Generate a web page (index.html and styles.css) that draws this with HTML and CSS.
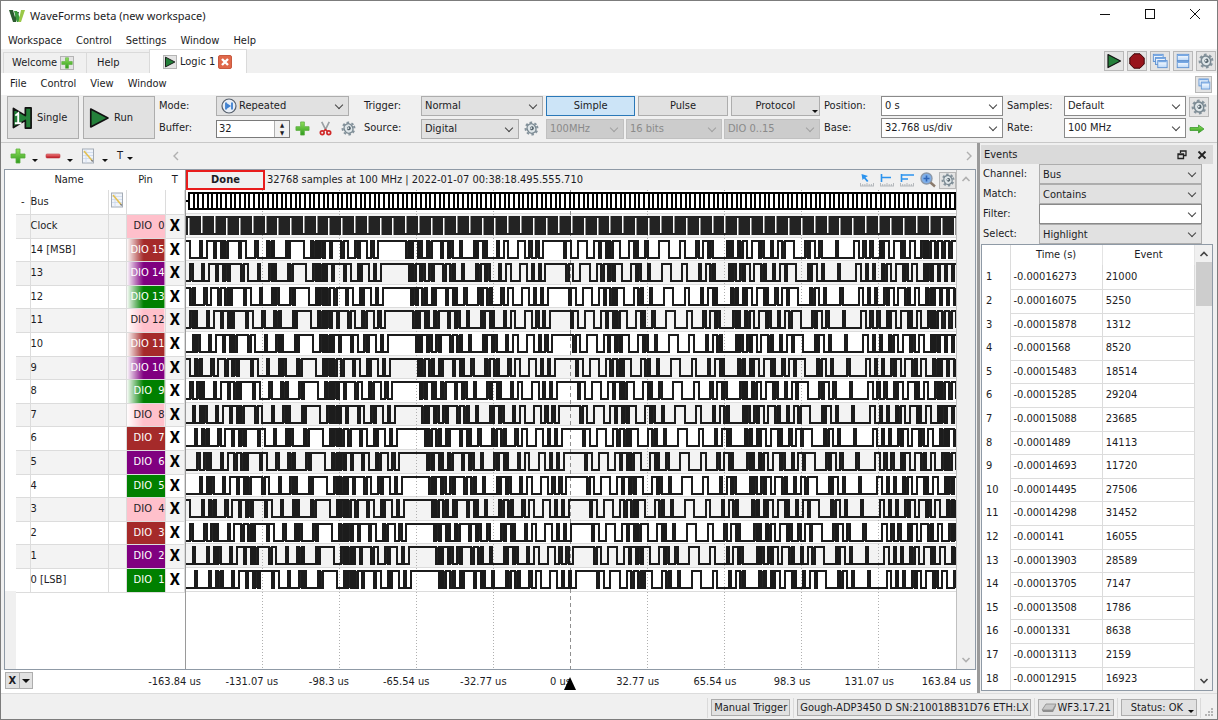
FILE: index.html
```html
<!DOCTYPE html>
<html lang="en">
<head>
    <meta charset="UTF-8">
    <meta name="viewport" content="width=device-width, initial-scale=1.0">
    <title>WaveForms beta (new workspace)</title>
    <link rel="stylesheet" href="styles.css">
</head>
<body>
    <svg class="defs" aria-hidden="true">
        <linearGradient id="green" x1="0" y1="0" x2="0" y2="1"><stop offset="0" stop-color="#8fe05a"/><stop offset="1" stop-color="#2f9a1e"/></linearGradient>
        <linearGradient id="red" x1="0" y1="0" x2="0" y2="1"><stop offset="0" stop-color="#f08080"/><stop offset="1" stop-color="#b8101c"/></linearGradient>
        <linearGradient id="blue" x1="0" y1="0" x2="0" y2="1"><stop offset="0" stop-color="#ffffff"/><stop offset="1" stop-color="#bcd8f8"/></linearGradient>
        <symbol id="i-plus" viewBox="0 0 16 16"><path d="M6 1h4v5h5v4h-5v5H6v-5H1V6h5z" fill="url(#green)" stroke="#5cae40" stroke-width=".8"/></symbol>
        <symbol id="i-minus" viewBox="0 0 16 16"><rect x="1" y="6" width="14" height="4" rx="1" fill="url(#red)" stroke="#c04048" stroke-width=".6"/></symbol>
        <symbol id="i-play" viewBox="0 0 16 16"><path d="M2 1.500L14.500 8 2 14.500z" fill="#24803a" stroke="#111" stroke-width="1.200" stroke-linejoin="round"/></symbol>
        <symbol id="i-single" viewBox="0 0 22 24"><path d="M1.500 2L14 9.500V1.500h6v21h-6v-8L1.500 22z" fill="#24803a" stroke="#111" stroke-width="1.800" stroke-linejoin="round"/><path d="M3.500 9.500l3-2.500v10M3 17.500h7" fill="none" stroke="#fff" stroke-width="2"/></symbol>
        <symbol id="i-stop" viewBox="0 0 16 16"><path d="M5 .8h6L15.200 5v6L11 15.200H5L.8 11V5z" fill="#98141c" stroke="#3a0508" stroke-width="1"/></symbol>
        <symbol id="i-gear" viewBox="0 0 16 16"><g transform="rotate(-25 8 8)"><circle cx="8" cy="8" r="6.300" fill="none" stroke="#85939c" stroke-width="2.200" stroke-dasharray="2.600 2.350"/><ellipse cx="8" cy="8" rx="4.600" ry="5.200" fill="#dfe6e9" stroke="#7a8992" stroke-width="1.500"/><circle cx="8.500" cy="8" r="2.100" fill="#56656e"/><circle cx="8" cy="7.500" r=".9" fill="#e8eef0"/></g></symbol>
        <symbol id="i-cut" viewBox="0 0 16 16"><path d="M4 1l4.500 9M12 1L7.500 10" stroke="#9aa0a4" stroke-width="1.800"/><circle cx="4.500" cy="12.500" r="2" fill="none" stroke="#d02828" stroke-width="1.800"/><circle cx="11.500" cy="12.500" r="2" fill="none" stroke="#d02828" stroke-width="1.800"/><path d="M6 11l2-2 2 2" fill="none" stroke="#d02828" stroke-width="1.500"/></symbol>
        <symbol id="i-note" viewBox="0 0 14 16"><rect x="1.500" y="1" width="11" height="14" fill="#f0f4fa" stroke="#a4acb6"/><path d="M2 4.500h10M2 7.500h10M2 10.500h10M5 1v14" stroke="#ccd8ec" stroke-width=".8"/><path d="M3 3l8 9.500" stroke="#e4c050" stroke-width="1.600"/><path d="M10.500 12l1.200 1.500" stroke="#777" stroke-width="1.300"/></symbol>
        <symbol id="i-cascade" viewBox="0 0 18 18"><g fill="url(#blue)" stroke="#5b8fd0" stroke-width="1"><rect x="1.500" y="1.500" width="11" height="8"/><rect x="4" y="5" width="11" height="8"/><rect x="6.500" y="8.500" width="10.500" height="8"/></g><path d="M2 2.500h10M4.500 6h10M7 9.500h9.500" stroke="#76a8e4" stroke-width="1.600"/></symbol>
        <symbol id="i-tile" viewBox="0 0 18 18"><g fill="url(#blue)" stroke="#5b8fd0"><rect x="2.500" y="1.500" width="13" height="7"/><rect x="2.500" y="9.500" width="13" height="7"/></g><path d="M3 2.500h12M3 10.500h12" stroke="#76a8e4" stroke-width="1.600"/></symbol>
        <symbol id="i-float" viewBox="0 0 18 18"><g fill="url(#blue)" stroke="#5b8fd0"><rect x="2.500" y="2.500" width="12" height="9"/><rect x="5.500" y="6.500" width="11" height="9"/></g><path d="M3 3.500h11M6 7.500h10" stroke="#76a8e4" stroke-width="1.600"/></symbol>
        <symbol id="i-ruler" viewBox="0 0 14 4"><path d="M0 3h14M.5 0v3M2.700 1v2M4.900 1v2M7 0v3M9.200 1v2M11.400 1v2M13.500 0v3" stroke="#b4b8bc" fill="none"/></symbol>
        <symbol id="i-left" viewBox="0 0 8 10"><path d="M6 1L2 5l4 4" fill="none" stroke="#b0b0b0" stroke-width="1.400"/></symbol>
        <symbol id="i-up" viewBox="0 0 10 8"><path d="M1.500 6L5 2.500 8.500 6" fill="none" stroke="currentColor" stroke-width="1.600"/></symbol>
    </svg>

    <header class="titlebar">
        <svg class="logo" viewBox="0 0 16 12"><path d="M0 0h4l2 7 2-5h2L7 12H4z" fill="#2c5a30"/><path d="M5 1h3l3 7-1.500 4H8z" fill="#3a9a3c"/><path d="M9.500 12L12 0h4l-4 12z" fill="#9ac848"/></svg>
        <h1>WaveForms beta (new workspace)</h1>
        <button class="win-btn" aria-label="Minimize"><svg viewBox="0 0 12 12"><path d="M1 6.500h10"/></svg></button>
        <button class="win-btn" aria-label="Maximize"><svg viewBox="0 0 12 12"><rect x="1.500" y="1.500" width="9" height="9"/></svg></button>
        <button class="win-btn" aria-label="Close"><svg viewBox="0 0 12 12"><path d="M1 1l10 10M11 1L1 11"/></svg></button>
    </header>

    <nav class="menu">
        <a href="#">Workspace</a><a href="#">Control</a><a href="#">Settings</a><a href="#">Window</a><a href="#">Help</a>
    </nav>

    <div class="tabs">
        <a href="#" class="tab welcome">Welcome <span class="mini"><svg><use href="#i-plus"/></svg></span></a>
        <a href="#" class="tab help">Help</a>
        <a href="#" class="tab active"><span class="mini"><svg><use href="#i-play"/></svg></span> Logic 1 <span class="close"><svg viewBox="0 0 12 12"><path d="M3 3l6 6M9 3L3 9" stroke="#fff" stroke-width="2.400"/></svg></span></a>
        <div class="tab-tools">
            <button class="icon-btn" aria-label="Run all"><svg><use href="#i-play"/></svg></button>
            <button class="icon-btn" aria-label="Stop all"><svg><use href="#i-stop"/></svg></button>
            <button class="icon-btn" aria-label="Cascade"><svg><use href="#i-cascade"/></svg></button>
            <button class="icon-btn" aria-label="Tile"><svg><use href="#i-tile"/></svg></button>
            <button class="icon-btn" aria-label="Options"><svg><use href="#i-gear"/></svg></button>
        </div>
    </div>

    <nav class="menu submenu">
        <a href="#">File</a><a href="#">Control</a><a href="#">View</a><a href="#">Window</a>
        <button class="icon-btn small" aria-label="Undock"><svg><use href="#i-float"/></svg></button>
    </nav>

    <div class="toolbar">
        <button class="big"><svg class="single"><use href="#i-single"/></svg>Single</button>
        <button class="big"><svg class="run"><use href="#i-play"/></svg>Run</button>
        <div class="group mode">
            <label for="mode">Mode:</label>
            <span class="combo with-icon"><svg class="lead" viewBox="0 0 16 16"><circle cx="8" cy="8" r="7" fill="#e8eef6" stroke="#555f6c" stroke-width="1.200"/><path d="M5 4.500v7M11 4.500v7" stroke="#3f80d0" stroke-width="1.800"/><path d="M5.500 5L10 8l-4.500 3z" fill="#3f80d0"/></svg><select id="mode"><option>Repeated</option></select></span>
            <label for="buffer">Buffer:</label>
            <div class="line">
                <span class="spin"><input id="buffer" type="text" value="32"><span class="steps"><button aria-label="More">▲</button><button aria-label="Less">▼</button></span></span>
                <svg class="ico"><use href="#i-plus"/></svg><svg class="ico"><use href="#i-cut"/></svg><svg class="ico"><use href="#i-gear"/></svg>
            </div>
        </div>
        <div class="group trigger">
            <label for="trig">Trigger:</label>
            <span class="combo"><select id="trig"><option>Normal</option></select></span>
            <label for="src">Source:</label>
            <div class="line"><span class="combo source"><select id="src"><option>Digital</option></select></span><svg class="ico"><use href="#i-gear"/></svg></div>
        </div>
        <div class="kinds">
            <div class="buttons"><button class="on">Simple</button><button>Pulse</button><button>Protocol<i class="caret"></i></button></div>
            <div class="line">
                <span class="combo off freq"><select disabled aria-label="Frequency"><option>100MHz</option></select></span>
                <span class="combo off"><select disabled aria-label="Width"><option>16 bits</option></select></span>
                <span class="combo off"><select disabled aria-label="Pins"><option>DIO 0..15</option></select></span>
            </div>
        </div>
        <div class="group position">
            <label for="pos">Position:</label>
            <span class="combo edit"><select id="pos"><option>0 s</option></select></span>
            <label for="base">Base:</label>
            <span class="combo edit"><select id="base"><option>32.768 us/div</option></select></span>
        </div>
        <div class="group samples">
            <label for="smp">Samples:</label>
            <span class="combo edit"><select id="smp"><option>Default</option></select></span>
            <label for="rate">Rate:</label>
            <span class="combo edit"><select id="rate"><option>100 MHz</option></select></span>
        </div>
        <div class="extra">
            <button class="icon-btn" aria-label="Sampling options"><svg><use href="#i-gear"/></svg></button>
            <svg class="arrow" viewBox="0 0 16 10"><path d="M1 3.500h8.500V1L15 5 9.500 9V6.500H1z" fill="url(#green)" stroke="#3c9a30" stroke-width=".8"/></svg>
        </div>
    </div>

    <main>
        <section class="logic">
            <div class="strip">
                <button aria-label="Add"><svg><use href="#i-plus"/></svg><i class="caret"></i></button>
                <button aria-label="Remove"><svg><use href="#i-minus"/></svg><i class="caret"></i></button>
                <button aria-label="Edit"><svg><use href="#i-note"/></svg><i class="caret"></i></button>
                <button class="t-btn">T<i class="caret"></i></button>
                <div class="hscroll"><svg><use href="#i-left"/></svg><svg class="flip"><use href="#i-left"/></svg></div>
            </div>
            <div class="panel">
                <div class="gutter"></div>
                <table class="signals">
                    <thead><tr><th></th><th>Name</th><th></th><th>Pin</th><th>T</th></tr></thead>
                    <tbody id="signals"></tbody>
                </table>
                <div class="plot">
                    <div class="info">
                        <strong>Done</strong>
                        <span>32768 samples at 100 MHz | 2022-01-07 00:38:18.495.555.710</span>
                        <div class="tools">
                            <svg viewBox="0 0 14 14"><path d="M1.500 1l1 6 1.500-1.500 3 3.500 1.500-1-3-3.500L8 3z" fill="#2b93ee"/><use href="#i-ruler" y="10" width="14" height="4"/></svg>
                            <svg viewBox="0 0 14 14"><path d="M1.500 1v8M1.500 4.500H11" stroke="#2b93ee" stroke-width="1.600"/><use href="#i-ruler" y="10" width="14" height="4"/></svg>
                            <svg viewBox="0 0 14 14"><path d="M1.500 1v8M1.500 2H14M1.500 6H8" stroke="#2b93ee" stroke-width="1.600" fill="none"/><use href="#i-ruler" y="10" width="14" height="4"/></svg>
                            <svg class="lens" viewBox="0 0 16 16"><circle cx="6.500" cy="6.500" r="5.500" fill="#7eaee8" stroke="#8c98a8" stroke-width="1.400"/><path d="M3.500 6.500h6M6.500 3.500v6" stroke="#2f66b8" stroke-width="1.600"/><path d="M10.500 10.500l4.500 4" stroke="#8a7a6c" stroke-width="2.400"/></svg>
                            <button class="icon-btn small" aria-label="Plot options"><svg><use href="#i-gear"/></svg></button>
                        </div>
                    </div>
                    <svg id="waves" class="waves" viewBox="0 0 770 479" preserveAspectRatio="none"></svg>
                </div>
                <div class="vscroll pale"><svg><use href="#i-up"/></svg><svg class="down"><use href="#i-up"/></svg></div>
            </div>
            <div class="axis">
                <div class="x-btn"><button>X</button><button aria-label="Axis menu"><i class="caret"></i></button></div>
                <div class="ticks">
                    <span>-163.84 us</span><span>-131.07 us</span><span>-98.3 us</span><span>-65.54 us</span><span>-32.77 us</span><span class="zero">0 us</span><span>32.77 us</span><span>65.54 us</span><span>98.3 us</span><span>131.07 us</span><span>163.84 us</span>
                </div>
            </div>
        </section>

        <aside class="events">
            <h2>Events
                <button aria-label="Float"><svg viewBox="0 0 10 10"><path d="M3.500 3V1h5.500v4.500H7M1 4h5.500v4.500H1zM1 4.500h5.500" fill="none" stroke="#222" stroke-width="1.300"/></svg></button>
                <button aria-label="Close events"><svg viewBox="0 0 10 10"><path d="M1.500 1.500l7 7M8.500 1.500l-7 7" stroke="#222" stroke-width="1.800"/></svg></button>
            </h2>
            <div class="filters">
                <label for="ch">Channel:</label><span class="combo"><select id="ch"><option>Bus</option></select></span>
                <label for="match">Match:</label><span class="combo"><select id="match"><option>Contains</option></select></span>
                <label for="filter">Filter:</label><span class="combo edit"><select id="filter"><option></option></select></span>
                <label for="sel">Select:</label><span class="combo"><select id="sel"><option>Highlight</option></select></span>
            </div>
            <div class="list">
                <div class="list-body">
                    <table>
                        <thead><tr><th></th><th>Time (s)</th><th>Event</th></tr></thead>
                        <tbody id="events"></tbody>
                    </table>
                </div>
                <div class="vscroll"><svg><use href="#i-up"/></svg><div class="thumb"></div><svg class="down"><use href="#i-up"/></svg></div>
            </div>
        </aside>
    </main>

    <footer>
        <i class="sep"></i>
        <button>Manual Trigger</button>
        <i class="sep"></i>
        <button>Gough-ADP3450 D SN:210018B31D76 ETH:LX</button>
        <i class="sep"></i>
        <button class="device"><svg viewBox="0 0 16 10"><path d="M5 1h10l-3.500 6H1z" fill="#c8c8c8" stroke="#8a8a8a" stroke-width=".8"/><path d="M1 7h10.500L15 1v2l-3 6H2z" fill="#8f8f8f"/></svg>WF3.17.21</button>
        <i class="sep"></i>
        <button class="status">Status: OK<i class="caret"></i></button>
        <i class="sep"></i>
        <svg class="grip" viewBox="0 0 9 9"><path d="M7 1h2M4 4h2M7 4h2M1 7h2M4 7h2M7 7h2" stroke="#b4b4b4" stroke-width="2"/></svg>
    </footer>

    <script>
        // Bus events, one every two bits of the shift register
        const events = [
            ['-0.00016273', 21000], ['-0.00016075', 5250], ['-0.00015878', 1312],
            ['-0.0001568', 8520], ['-0.00015483', 18514], ['-0.00015285', 29204],
            ['-0.00015088', 23685], ['-0.0001489', 14113], ['-0.00014693', 11720],
            ['-0.00014495', 27506], ['-0.00014298', 31452], ['-0.000141', 16055],
            ['-0.00013903', 28589], ['-0.00013705', 7147], ['-0.00013508', 1786],
            ['-0.0001331', 8638], ['-0.00013113', 2159], ['-0.00012915', 16923]
        ];
        document.getElementById('events').innerHTML = events.map(([time, value], i) =>
            `<tr><th>${i + 1}</th><td>${time}</td><td>${value}</td></tr>`).join('');

        // Signal list
        const colors = ['pink', 'green', 'purple', 'brown'];
        const rows = [`<tr><td>-</td><td>Bus</td><td><svg class="note"><use href="#i-note"/></svg></td><td></td><td></td></tr>`];
        const addRow = (name, dio) => rows.push(
            `<tr><td></td><td>${name}</td><td></td>` +
            `<td class="pin ${colors[dio % 4]}${dio > 7 ? ' fade' : ''}">DIO&nbsp;${dio < 10 ? '&nbsp;' : ''}${dio}</td><td class="trig">X</td></tr>`);
        addRow('Clock', 0);
        for (let bit = 14; bit >= 0; bit--) {
            addRow(bit === 14 ? '14 [MSB]' : bit === 0 ? '0 [LSB]' : bit, bit + 1);
        }
        document.getElementById('signals').innerHTML = rows.join('');

        // 16 bit LFSR, x^16 + x^15 + x^13 + x^4 + 1
        const bits = Array.from('0001000001001010', Number);
        while (bits.length < 370) {
            const n = bits.length;
            bits.push(bits[n - 4] ^ bits[n - 13] ^ bits[n - 15] ^ bits[n - 16]);
        }

        const STEP = 2.3209;
        const WIDTH = 770;
        const tops = [0];
        for (let i = 0; i < 17; i++) {
            tops.push(tops[i] + (i % 5 === 2 || i % 5 === 4 ? 23 : 24));
        }
        let svg = '';
        const rect = (x, y, w, h, fill) => svg += `<rect x="${x}" y="${y}" width="${w}" height="${h}" fill="${fill}"/>`;

        for (let i = 0; i < 17; i++) {
            if (i % 2) rect(0, tops[i], WIDTH, 23, '#f3f3f3');
            rect(0, tops[i + 1] - 1, WIDTH, 1, '#dcdcdc');
        }
        // Grid
        for (let i = 1; i < 10; i++) {
            svg += `<path d="M${i * 77 - 0.5} 0V479" stroke="${i === 5 ? '#909090' : '#b0b0b0'}" stroke-dasharray="${i === 5 ? '4 3' : '1 2'}"/>`;
        }
        // Bus
        rect(0, 10, 3, 2, '#000');
        rect(2, 2, WIDTH - 2, 18, '#000');
        for (let x = 4; x < WIDTH - 2; x += STEP * 2) {
            rect(Math.round(x), 4, Math.round(x + STEP * 2) - Math.round(x) - 2, 14, '#fff');
        }
        // Clock
        rect(0, tops[1] + 2, WIDTH, 19, '#232323');
        for (let i = 0; i < 61; i++) {
            const top = i % 4 === 0 || i % 4 === 3;
            rect(Math.round(2 + i * 12.77), tops[1] + (top ? 4 : 2), 1.5, 17, '#fff');
        }
        // Data lines, each one bit behind the line above
        for (let row = 2; row < 17; row++) {
            const hi = tops[row] + 3;
            const lo = tops[row] + 20;
            let first = 16 - row;
            let d = `M0 ${bits[first] ? hi : lo}`;
            let edge = null;
            for (let k = 1; ; k++) {
                const x = Math.round(4.4 + (k - 1) * STEP);
                if (x > WIDTH) break;
                if (bits[first + k] === bits[first + k - 1]) continue;
                if (edge && edge.k === k - 1) rect(edge.x, hi, x - edge.x, lo - hi, '#232323');
                d += `H${x}V${bits[first + k] ? hi : lo}`;
                edge = { k, x };
            }
            svg += `<path d="${d}H${WIDTH}" fill="none" stroke="#1c1c1c" stroke-width="2"/>`;
        }
        document.getElementById('waves').innerHTML = svg;
    </script>
</body>
</html>
```

FILE: styles.css
```css
* {
    box-sizing: border-box;
}

body {
    margin: 0;
    height: 100vh;
    display: flex;
    flex-direction: column;
    overflow: hidden;
    border: 1px solid #7c7c7c;
    background: #fff;
    color: #1c1c24;
    font: 11px/14px "DejaVu Sans Condensed", "Noto Sans", sans-serif;
}

button, select, input {
    font: inherit;
    color: inherit;
    margin: 0;
    padding: 0;
    border-radius: 0;
}

button {
    border: none;
    background: none;
}

a {
    color: inherit;
    text-decoration: none;
}

.defs {
    position: absolute;
    width: 0;
    height: 0;
}

/* title and menus */
.titlebar {
    display: flex;
    align-items: center;
    height: 29px;
    padding-left: 8px;
}

.logo {
    width: 16px;
    height: 12px;
    margin-right: 5px;
}

h1 {
    flex: 1;
    margin: 0;
    font: 11px/16px "Noto Sans", sans-serif;
}

.win-btn {
    width: 45px;
    height: 28px;
}

.win-btn svg {
    width: 12px;
    height: 12px;
    fill: none;
    stroke: #111;
}

.menu {
    display: flex;
    align-items: center;
    gap: 14px;
    height: 19px;
    padding: 2px 7px 0;
}

.submenu {
    height: 22px;
    padding: 0 5px 0 9px;
}

.submenu .icon-btn {
    margin-left: auto;
}

.tabs {
    display: flex;
    align-items: flex-end;
    height: 24px;
    padding-left: 2px;
    background: #f0f0f0;
}

.tab {
    display: flex;
    align-items: center;
    gap: 3px;
    height: 21px;
    border: 1px solid #dadada;
    border-bottom: none;
    margin-right: -1px;
}

.tab.welcome {
    width: 84px;
    padding-left: 8px;
}

.tab.help {
    width: 64px;
    padding-left: 10px;
}

.tab.active {
    width: 98px;
    height: 24px;
    padding-left: 13px;
    background: #fff;
}

.mini {
    display: flex;
    width: 14px;
    height: 14px;
    border: 1px solid #b4b4b4;
    background: #e4e4e4;
}

.mini svg {
    width: 12px;
    height: 12px;
}

.close {
    display: flex;
    width: 14px;
    height: 14px;
    border: 1px solid #c85a40;
    border-radius: 2px;
    background: #e0684a;
}

.tab-tools {
    display: flex;
    align-self: center;
    gap: 3px;
    margin: 0 1px 0 auto;
}

.icon-btn {
    display: flex;
    align-items: center;
    justify-content: center;
    width: 20px;
    height: 20px;
    border: 1px solid #b8b8b8;
    background: #e4e4e4;
}

.icon-btn svg {
    width: 16px;
    height: 16px;
}

.icon-btn.small {
    width: 17px;
    height: 17px;
}

.icon-btn.small svg {
    width: 14px;
    height: 14px;
}

/* toolbar */
.toolbar {
    display: flex;
    height: 48px;
    padding: 1px 8px 0 6px;
    border-bottom: 1px solid #c8c8c8;
    background: #f0f0f0;
}

.big {
    display: flex;
    align-items: center;
    gap: 4px;
    width: 72px;
    height: 43px;
    margin-right: 4px;
    padding-left: 4px;
    border: 1px solid #adadad;
    background: #e1e1e1;
}

.single {
    width: 21px;
    height: 24px;
}

.run {
    width: 22px;
    height: 24px;
}

.group {
    display: grid;
    grid-template-columns: 57px 1fr;
    grid-auto-rows: 21px;
    row-gap: 1px;
}

.group label {
    line-height: 20px;
}

.mode {
    flex: 1 1 190px;
    margin-right: 15px;
}

.trigger {
    flex: 1 1 179px;
    margin-right: 3px;
}

.kinds {
    display: grid;
    flex: 1 1 274px;
    grid-auto-rows: 21px;
    row-gap: 1px;
    margin-right: 4px;
}

.position {
    flex: 1 1 179px;
    margin-right: 4px;
}

.samples {
    flex: 1 1 179px;
    margin-right: 3px;
}

.line {
    display: flex;
    align-items: center;
    gap: 2px;
    min-width: 0;
}

.ico {
    flex: none;
    width: 15px;
    height: 15px;
    margin-left: 6px;
}

.spin + .ico {
    margin-left: 3px;
}

.combo {
    position: relative;
    display: flex;
    flex: 1;
    min-width: 0;
    height: 20px;
    border: 1px solid #adadad;
    background: #e1e1e1;
}

.combo::after {
    content: "";
    position: absolute;
    right: 6px;
    top: 5px;
    width: 5px;
    height: 5px;
    border-right: 1px solid #444;
    border-bottom: 1px solid #444;
    transform: rotate(45deg);
}

.combo select {
    width: 100%;
    padding-left: 3px;
    border: none;
    appearance: none;
    background: none;
}

.combo.edit {
    border-color: #8a8a8a;
    background: #fff;
}

.combo.off {
    border-color: #c0c0c0;
    background: #ccc;
    color: #8a8a8a;
}

.combo.off select {
    opacity: 1;
}

.combo.off::after {
    border-color: #a0a0a0;
}

.combo.with-icon {
    padding-left: 4px;
}

.with-icon select {
    padding-left: 2px;
}

.lead {
    flex: none;
    width: 16px;
    height: 16px;
    margin-top: 1px;
}

.combo.freq {
    flex: 0 0 78px;
}

.combo.source {
    flex: 0 0 98px;
}

.source + .ico {
    margin-left: 3px;
}

.spin {
    display: flex;
    flex: none;
    width: 74px;
    height: 18px;
    border: 1px solid #7a7a7a;
    background: #fff;
}

.spin input {
    flex: 1;
    min-width: 0;
    padding-left: 2px;
    border: none;
    background: none;
}

.steps {
    display: flex;
    flex-direction: column;
    width: 15px;
    border-left: 1px solid #b0b0b0;
    background: #f0f0f0;
}

.steps button {
    height: 8px;
    font-size: 6px;
    line-height: 8px;
}

.buttons {
    display: flex;
    gap: 3px;
    height: 20px;
}

.buttons button {
    position: relative;
    flex: 1;
    border: 1px solid #adadad;
    background: #e1e1e1;
}

.buttons .on {
    border-color: #2a78b8;
    background: #cce4f7;
}

.caret {
    width: 0;
    height: 0;
    border: 3px solid transparent;
    border-top-color: #111;
    border-bottom: none;
}

.buttons .caret {
    position: absolute;
    right: 1px;
    bottom: 2px;
}

.extra {
    display: grid;
    grid-auto-rows: 21px;
    row-gap: 1px;
    align-items: center;
}

.arrow {
    width: 16px;
    height: 10px;
}

/* logic view */
main {
    display: flex;
    flex: 1;
    min-height: 0;
    background: #f0f0f0;
}

.logic {
    display: flex;
    flex: 1;
    flex-direction: column;
    min-width: 0;
    border-right: 3px solid #9a9a9a;
}

.strip {
    display: flex;
    align-items: center;
    height: 26px;
    padding-left: 9px;
}

.strip button {
    display: flex;
    align-items: center;
    width: 35px;
}

.strip button svg {
    width: 16px;
    height: 16px;
}

.strip button .caret {
    margin: 8px 0 0 6px;
}

.strip .t-btn {
    width: 57px;
    padding-left: 2px;
}

.strip .t-btn .caret {
    margin: 4px 0 0 4px;
}

.hscroll {
    display: flex;
    flex: 1;
    justify-content: space-between;
    padding-right: 4px;
}

.hscroll svg {
    width: 8px;
    height: 10px;
}

.flip {
    transform: scaleX(-1);
}

.panel {
    display: flex;
    flex: 1;
    min-height: 0;
    margin: 0 1px 0 3px;
    border: 1px solid #8f9aa6;
    background: #fff;
}

.gutter {
    width: 11px;
    margin-top: 421px;
    background: #f0f0f0;
}

.signals {
    align-self: flex-start;
    width: 169px;
    table-layout: fixed;
    border-collapse: collapse;
}

table th, table td {
    padding: 0;
    font-weight: normal;
    text-align: left;
}

.signals thead tr {
    height: 20px;
}

.signals th {
    text-align: center;
}

.signals th:nth-child(1) {
    width: 14px;
}

.signals th:nth-child(2) {
    width: 78px;
}

.signals th:nth-child(3) {
    width: 18px;
}

.signals th:nth-child(4) {
    width: 39px;
}

.signals td {
    border-bottom: 1px solid #dcdcdc;
    border-right: 1px solid #dcdcdc;
}

.signals td:first-child {
    text-align: center;
}

tbody tr {
    height: 24px;
}

tbody tr:nth-child(5n+3), tbody tr:nth-child(5n) {
    height: 23px;
}

.signals tbody tr:nth-child(even) {
    background: #f3f3f3;
}

.note {
    display: block;
    width: 16px;
    height: 16px;
    margin-top: -4px;
}

.signals .pin {
    color: #fff;
    text-align: right;
    background: var(--pin);
}

.signals .fade {
    background: linear-gradient(90deg, #fff, var(--pin) 45%);
}

.pink {
    --pin: #ffc0cb;
}

.brown {
    --pin: #a52a2a;
}

.purple {
    --pin: #800080;
}

.green {
    --pin: #008000;
}

.signals .pin.pink {
    color: #1c1c24;
}

.signals .trig {
    color: #000;
    font: bold 16px/16px Roboto, sans-serif;
    text-align: center;
}

.plot {
    display: flex;
    flex: 1;
    flex-direction: column;
    min-width: 0;
    border-left: 1px solid #9a9a9a;
    border-right: 1px solid #c0c0c0;
}

.info {
    display: flex;
    align-items: center;
    height: 20px;
    background: #f0f0f0;
}

.info strong {
    width: 79px;
    height: 20px;
    margin-right: 2px;
    border: 2px solid #e81c1c;
    text-align: center;
    line-height: 16px;
}

.tools {
    display: flex;
    align-items: center;
    gap: 6px;
    margin-left: auto;
}

.tools svg {
    width: 14px;
    height: 14px;
}

.tools .lens {
    width: 16px;
    height: 16px;
}

.tools .icon-btn {
    margin-left: -3px;
}

.waves {
    display: block;
    width: 100%;
    height: 479px;
}

.vscroll {
    display: flex;
    flex-direction: column;
    align-items: center;
    width: 17px;
    padding: 5px 0;
    background: #f0f0f0;
    color: #444;
}

.pale {
    width: 18px;
    color: #b0b0b0;
}

.vscroll svg {
    width: 10px;
    height: 8px;
}

.down {
    margin-top: auto;
    transform: scaleY(-1);
}

.thumb {
    width: 16px;
    height: 44px;
    margin-top: 4px;
    background: #cdcdcd;
}

.axis {
    display: flex;
    height: 23px;
    padding-left: 4px;
    background: #fff;
}

.x-btn {
    display: flex;
    width: 28px;
    height: 17px;
    margin-top: 2px;
    border: 1px solid #adadad;
    background: #e1e1e1;
    font-weight: bold;
}

.x-btn button {
    display: flex;
    flex: 1;
    align-items: center;
    justify-content: center;
}

.x-btn button + button {
    border-left: 1px solid #adadad;
}

.x-btn .caret {
    border-width: 4px;
    border-bottom: none;
}

.ticks {
    display: grid;
    flex: 1;
    grid-template-columns: repeat(11, 1fr);
    margin: 0 -8px 0 103px;
    line-height: 23px;
    text-align: center;
}

.zero {
    position: relative;
}

.zero::after {
    content: "";
    position: absolute;
    left: 42px;
    top: 7px;
    border: 6px solid transparent;
    border-top: none;
    border-bottom: 13px solid #000;
}

/* events dock */
.events {
    display: flex;
    flex-direction: column;
    width: 237px;
    padding: 2px 4px 2px 1px;
}

h2 {
    display: flex;
    align-items: center;
    gap: 10px;
    height: 19px;
    margin: 0;
    padding: 0 6px 0 3px;
    background: #dadada;
    font-size: 11px;
    font-weight: normal;
}

h2 button:first-of-type {
    margin-left: auto;
}

h2 svg {
    display: block;
    width: 10px;
    height: 10px;
}

.filters {
    display: grid;
    grid-template-columns: 56px 1fr;
    grid-auto-rows: 20px;
    padding: 0 11px 0 2px;
    line-height: 20px;
}

.list {
    display: flex;
    flex: 1;
    min-height: 0;
    border: 1px solid #8f9aa6;
    background: #fff;
}

.list-body {
    flex: 1;
    overflow: hidden;
}

.list table {
    width: 100%;
    table-layout: fixed;
    border-collapse: collapse;
}

.list thead tr {
    height: 20px;
}

.list thead th {
    border-right: 1px solid #e4e4e4;
    text-align: center;
}

.list th:first-child {
    width: 28px;
    padding-left: 4px;
    border-right: 1px solid #dcdcdc;
}

.list td {
    padding-left: 3px;
    border-bottom: 1px solid #dcdcdc;
    border-right: 1px solid #dcdcdc;
}

/* status bar */
footer {
    display: flex;
    align-items: center;
    justify-content: flex-end;
    gap: 3px;
    height: 26px;
    padding: 2px 4px 0 0;
    border-top: 1px solid #dcdcdc;
    background: #f0f0f0;
}

footer button {
    display: flex;
    align-items: center;
    height: 17px;
    padding: 0 2px;
    border: 1px solid #adadad;
    background: #e1e1e1;
}

.sep {
    width: 1px;
    height: 20px;
    background: #dadada;
}

.device svg {
    width: 16px;
    height: 10px;
}

.status {
    padding: 0 2px 0 9px;
}

.status .caret {
    margin: 7px 0 0 5px;
}

.grip {
    align-self: flex-end;
    width: 9px;
    height: 9px;
    margin-bottom: 2px;
}
```
